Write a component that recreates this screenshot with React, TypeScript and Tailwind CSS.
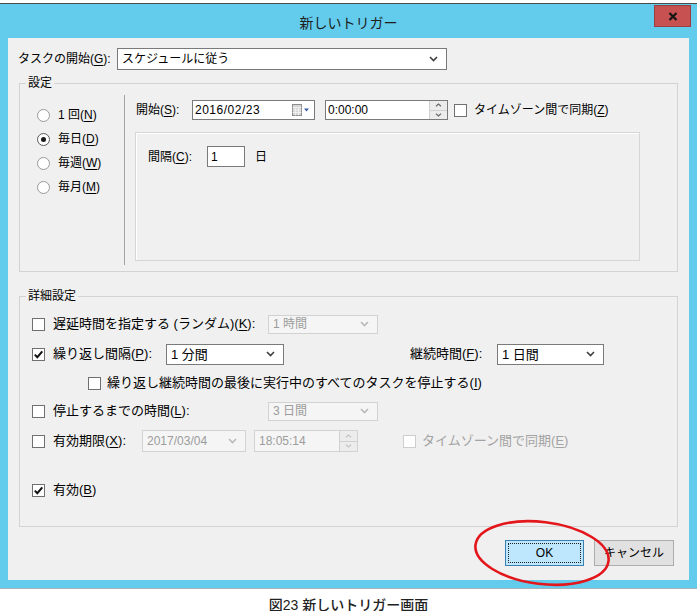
import React from "react";
import clsx from "clsx";

// Windows-style "new trigger" dialog with a caption underneath.

const FONT = "font-['Liberation_Sans','Noto_Sans_CJK_JP',sans-serif]";

function Mn({ k }: { k: string }) {
  return (
    <>
      (<span className="underline underline-offset-2">{k}</span>)
    </>
  );
}

function Chevron({ dim }: { dim?: boolean }) {
  return (
    <svg width="9" height="6" viewBox="0 0 9 6" className="shrink-0">
      <path d="M1 1l3.5 3.5L8 1" fill="none" stroke={dim ? "#b9b9b9" : "#404040"} strokeWidth="1.6" />
    </svg>
  );
}

function Select({ value, className, dim }: { value: string; className?: string; dim?: boolean }) {
  return (
    <div
      className={clsx(
        "flex items-center justify-between border pl-[4px] pr-[8px] leading-none",
        dim ? "border-[#d2d2d2] bg-[#f5f5f5] text-[#9c9c9c]" : "border-[#7a7a7a] bg-white text-black",
        className
      )}
    >
      <span>{value}</span>
      <Chevron dim={dim} />
    </div>
  );
}

function CheckBox({ checked, dim }: { checked?: boolean; dim?: boolean }) {
  return (
    <span
      className={clsx(
        "flex h-[13px] w-[13px] shrink-0 items-center justify-center border bg-white",
        dim ? "border-[#cdcdcd]" : "border-[#707070]"
      )}
    >
      {checked && (
        <svg width="11" height="11" viewBox="0 0 11 11">
          <path d="M1.8 5.6l2.5 2.6L9.3 2.4" fill="none" stroke="#111" strokeWidth="2" />
        </svg>
      )}
    </span>
  );
}

function Radio({ checked }: { checked?: boolean }) {
  return (
    <span
      className={clsx(
        "flex h-[13px] w-[13px] shrink-0 items-center justify-center rounded-full border bg-white",
        checked ? "border-[#5a5a5a]" : "border-[#9a9a9a]"
      )}
    >
      {checked && <span className="h-[5px] w-[5px] rounded-full bg-[#1a1a1a]" />}
    </span>
  );
}

function Spin({ dim }: { dim?: boolean }) {
  const c = dim ? "#c4c4c4" : "#6a6a6a";
  return (
    <div className="flex h-full w-[18px] flex-col border-l border-[#d0d0d0] bg-[#ececec]">
      <div className="flex flex-1 items-center justify-center border-b border-[#d0d0d0]">
        <svg width="7" height="4" viewBox="0 0 7 4">
          <path d="M1 3.3L3.5 1 6 3.3" fill="none" stroke={c} strokeWidth="1.2" />
        </svg>
      </div>
      <div className="flex flex-1 items-center justify-center">
        <svg width="7" height="4" viewBox="0 0 7 4">
          <path d="M1 0.7L3.5 3 6 0.7" fill="none" stroke={c} strokeWidth="1.2" />
        </svg>
      </div>
    </div>
  );
}

function CalendarDrop() {
  return (
    <svg width="18" height="12" viewBox="0 0 18 12" className="shrink-0">
      <rect x="0.5" y="0.5" width="9" height="11" fill="#d6d6d6" stroke="#8c8c8c" />
      <path d="M0.5 3.5h9M0.5 6h9M0.5 8.5h9M3.5 3.5v8M6.5 3.5v8" stroke="#f4f4f4" strokeWidth="0.8" />
      <path d="M12 4.5h5l-2.5 3z" fill="#3a5aa6" />
    </svg>
  );
}

function Field({ className, children }: { className?: string; children: React.ReactNode }) {
  return (
    <div className={clsx("flex items-center border border-[#7a7a7a] bg-white", className)}>{children}</div>
  );
}

function Legend({ children }: { children: React.ReactNode }) {
  return <legend className="ml-[6px] px-[2px] text-[12px] leading-[16px] text-black">{children}</legend>;
}

export default function App() {
  return (
    <div className={clsx("relative h-[611px] w-[697px] overflow-hidden bg-white text-black", FONT)}>
      <div className="pt-[3px]">
        <div className="border-t border-b border-t-[#4b4b4b] border-b-[#a7b3ba] bg-[#63cbeb]">
          {/* title bar */}
          <div className="relative flex h-[34px] justify-center pt-[9px]">
            <span className="text-[14px] leading-[20px] text-[#1d1d1d]">新しいトリガー</span>
            <div className="absolute right-[6px] top-[1px] flex h-[22px] w-[37px] items-center justify-center border border-[#9a3f3f] bg-[#c75050]">
              <svg width="10" height="9" viewBox="0 0 10 9">
                <path d="M1.5 1l7 7M8.5 1l-7 7" stroke="#151515" strokeWidth="2.2" />
              </svg>
            </div>
          </div>

          {/* dialog body */}
          <div className="mx-[8px] mb-[8px] flex h-[542px] flex-col bg-[#f0f0f0] text-[12px]">
            <div className="ml-[10px] mt-[10px] flex h-[22px] items-center">
              <span className="w-[99px]">
                タスクの開始<Mn k="G" />:
              </span>
              <Select value="スケジュールに従う" className="h-[22px] w-[330px]" />
            </div>

            {/* 設定 */}
            <fieldset className="mx-[11px] mt-[5px] h-[197px] border border-[#d3d3d3]">
              <Legend>設定</Legend>
              <div className="flex pt-[4px]">
                <div className="flex h-[170px] w-[105px] flex-col border-r border-[#a3a3a3] pl-[17px] pt-[8px]">
                  {[
                    ["1 回", "N", false],
                    ["毎日", "D", true],
                    ["毎週", "W", false],
                    ["毎月", "M", false],
                  ].map(([t, k, on]) => (
                    <label key={k as string} className="flex h-[24px] items-center gap-[8px]">
                      <Radio checked={on as boolean} />
                      <span>
                        {t as string}
                        <Mn k={k as string} />
                      </span>
                    </label>
                  ))}
                </div>

                <div className="flex flex-col pl-[10px] pt-[5px]">
                  <div className="flex h-[20px] items-center">
                    <span className="w-[57px] pl-[1px]">
                      開始<Mn k="S" />:
                    </span>
                    <Field className="h-[20px] w-[123px] justify-between pl-[2px] pr-[4px]">
                      <span className="tracking-[0.5px]">2016/02/23</span>
                      <CalendarDrop />
                    </Field>
                    <Field className="ml-[10px] h-[20px] w-[123px] justify-between pl-[2px]">
                      <span>0:00:00</span>
                      <Spin />
                    </Field>
                    <span className="ml-[6px]">
                      <CheckBox />
                    </span>
                    <span className="ml-[7px]">
                      タイムゾーン間で同期<Mn k="Z" />
                    </span>
                  </div>

                  <div className="mt-[12px] h-[129px] w-[505px] border border-[#d6d6d6] pl-[12px] pt-[13px] shadow-[inset_1px_1px_0_#ffffff]">
                    <div className="flex items-center">
                      <span className="w-[59px]">
                        間隔<Mn k="C" />:
                      </span>
                      <Field className="h-[21px] w-[38px] pl-[3px]">1</Field>
                      <span className="ml-[10px]">日</span>
                    </div>
                  </div>
                </div>
              </div>
            </fieldset>

            {/* 詳細設定 */}
            <fieldset className="mx-[11px] mt-[16px] h-[239px] border border-[#d3d3d3]">
              <Legend>詳細設定</Legend>
              <div className="flex flex-col pl-[12px] pt-[9px] text-[13px]">
                <div className="flex h-[22px] items-center">
                  <CheckBox />
                  <span className="ml-[8px] w-[215px]">
                    遅延時間を指定する (ランダム)<Mn k="K" />:
                  </span>
                  <Select value="1 時間" dim className="h-[19px] w-[110px] text-[12px]" />
                </div>

                <div className="mt-[8px] flex h-[22px] items-center">
                  <CheckBox checked />
                  <span className="ml-[8px] w-[113px]">
                    繰り返し間隔<Mn k="P" />:
                  </span>
                  <Select value="1 分間" className="h-[21px] w-[118px]" />
                  <span className="ml-[126px] w-[87px]">
                    継続時間<Mn k="F" />:
                  </span>
                  <Select value="1 日間" className="h-[21px] w-[107px]" />
                </div>

                <div className="mt-[7px] flex h-[22px] items-center pl-[56px]">
                  <CheckBox />
                  <span className="ml-[6px]">
                    繰り返し継続時間の最後に実行中のすべてのタスクを停止する<Mn k="I" />
                  </span>
                </div>

                <div className="mt-[6px] flex h-[22px] items-center">
                  <CheckBox />
                  <span className="ml-[8px] w-[215px]">
                    停止するまでの時間<Mn k="L" />:
                  </span>
                  <Select value="3 日間" dim className="h-[19px] w-[110px] text-[12px]" />
                </div>

                <div className="mt-[8px] flex h-[22px] items-center">
                  <CheckBox />
                  <span className="ml-[8px] w-[89px]">
                    有効期限<Mn k="X" />:
                  </span>
                  <Select value="2017/03/04" dim className="h-[22px] w-[104px] text-[12px]" />
                  <div className="ml-[8px] flex h-[22px] w-[104px] items-center justify-between border border-[#d2d2d2] bg-[#f5f5f5] pl-[4px] text-[12px] text-[#9c9c9c]">
                    <span>18:05:14</span>
                    <Spin dim />
                  </div>
                  <span className="ml-[45px]">
                    <CheckBox dim />
                  </span>
                  <span className="ml-[6px] text-[#a3a3a3]">
                    タイムゾーン間で同期<Mn k="E" />
                  </span>
                </div>

                <div className="mt-[27px] flex h-[22px] items-center">
                  <CheckBox checked />
                  <span className="ml-[8px]">
                    有効<Mn k="B" />
                  </span>
                </div>
              </div>
            </fieldset>

            <div className="mt-[13px] flex justify-end gap-[10px] pr-[15px]">
              <div className="h-[26px] w-[79px] border border-[#3c7fb1] bg-[#bee6fd] p-[2px]">
                <div className="flex h-full items-center justify-center border border-dotted border-[#202020]">OK</div>
              </div>
              <div className="flex h-[26px] w-[80px] items-center justify-center border border-[#adadad] bg-[#e1e1e1]">
                キャンセル
              </div>
            </div>
          </div>
        </div>
      </div>

      <p className="mt-[8px] text-center text-[14px] font-medium leading-[16px] text-[#222]">図23 新しいトリガー画面</p>

      {/* red highlight around the OK button */}
      <svg className="absolute left-[470px] top-[516px]" width="144" height="74" viewBox="0 0 144 74">
        <ellipse cx="72" cy="37" rx="67" ry="31" fill="none" stroke="#e3161b" strokeWidth="2.6" transform="rotate(7 72 37)" />
      </svg>
    </div>
  );
}
